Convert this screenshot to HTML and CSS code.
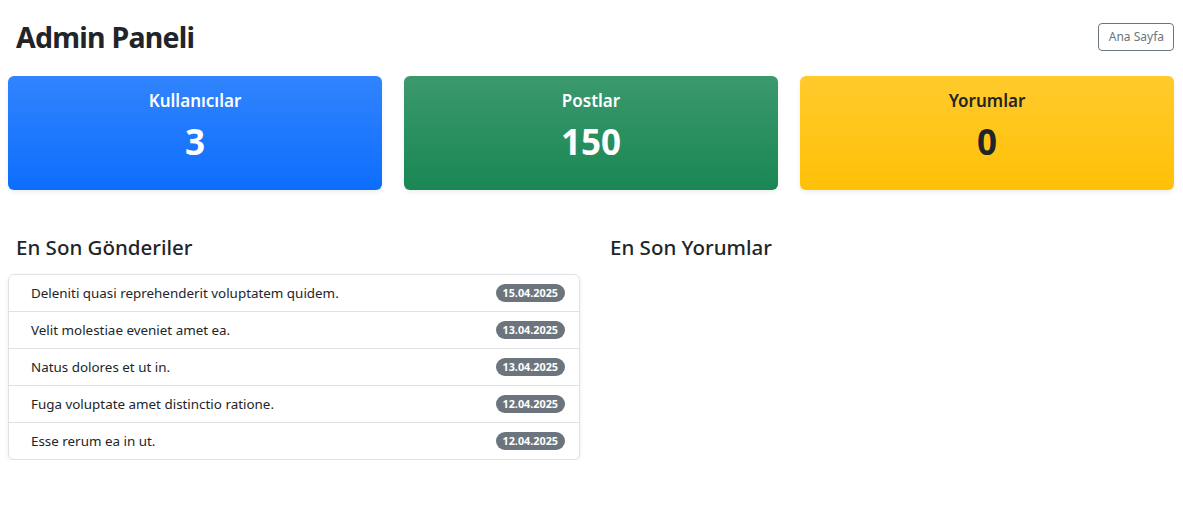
FILE: index.html
```html
<!DOCTYPE html>
<html lang="tr">
<head>
<meta charset="utf-8">
<title>Admin Paneli</title>
<link rel="stylesheet" href="styles.css">
</head>
<body>
<div class="page">
  <header class="topbar">
    <h1 class="title">Admin Paneli</h1>
    <a class="btn-outline" href="#">Ana Sayfa</a>
  </header>

  <section class="stats">
    <div class="stat stat-blue">
      <h5 class="stat-label">Kullanıcılar</h5>
      <p class="stat-value">3</p>
    </div>
    <div class="stat stat-green">
      <h5 class="stat-label">Postlar</h5>
      <p class="stat-value">150</p>
    </div>
    <div class="stat stat-yellow">
      <h5 class="stat-label">Yorumlar</h5>
      <p class="stat-value">0</p>
    </div>
  </section>

  <section class="lists">
    <div class="col">
      <h4 class="section-title">En Son Gönderiler</h4>
      <ul class="list">
        <li class="item"><span>Deleniti quasi reprehenderit voluptatem quidem.</span><span class="badge">15.04.2025</span></li>
        <li class="item"><span>Velit molestiae eveniet amet ea.</span><span class="badge">13.04.2025</span></li>
        <li class="item"><span>Natus dolores et ut in.</span><span class="badge">13.04.2025</span></li>
        <li class="item"><span>Fuga voluptate amet distinctio ratione.</span><span class="badge">12.04.2025</span></li>
        <li class="item"><span>Esse rerum ea in ut.</span><span class="badge">12.04.2025</span></li>
      </ul>
    </div>
    <div class="col">
      <h4 class="section-title">En Son Yorumlar</h4>
    </div>
  </section>
</div>
</body>
</html>
```

FILE: styles.css
```css
* { box-sizing: border-box; }

body {
  margin: 0;
  background: #fff;
  color: #212529;
  font-family: "Noto Sans", "Open Sans", sans-serif;
}

.page {
  padding: 0 9px 0 8px;
}

.topbar {
  display: flex;
  justify-content: space-between;
  align-items: center;
  height: 38px;
  margin-top: 18px;
}

.title {
  margin: 0;
  padding-left: 8px;
  font-size: 28.5px;
  font-weight: 700;
  line-height: 38px;
  letter-spacing: -0.75px;
}

.btn-outline {
  display: inline-block;
  height: 28px;
  line-height: 26px;
  padding: 0 9px 0 10px;
  border: 1px solid #6c757d;
  border-radius: 4px;
  color: #6c757d;
  font-size: 12px;
  text-decoration: none;
  margin-top: -1px;
}

.stats {
  display: grid;
  grid-template-columns: repeat(3, 1fr);
  gap: 22px;
  margin-top: 20px;
}

.stat {
  height: 114px;
  border-radius: 6px;
  box-shadow: 0 2px 4px rgba(0, 0, 0, 0.075);
  text-align: center;
  padding-top: 13px;
  color: #fff;
  background-image: linear-gradient(180deg, rgba(255,255,255,0.15), rgba(255,255,255,0));
}

.stat-blue { background-color: #0d6efd; }
.stat-green { background-color: #198754; }
.stat-yellow { background-color: #ffc107; color: #212529; }

.stat-label {
  margin: 0;
  font-size: 17px;
  font-weight: 600;
  line-height: 24px;
}

.stat-value {
  margin: 8px 0 0;
  font-size: 35px;
  font-weight: 700;
  line-height: 42px;
}

.lists {
  display: grid;
  grid-template-columns: 1fr 1fr;
  gap: 22px;
  margin-top: 43px;
}

.section-title {
  margin: 0 0 13px;
  padding-left: 8px;
  font-size: 20.5px;
  font-weight: 500;
  line-height: 28px;
}

.list {
  list-style: none;
  margin: 0;
  padding: 0;
  border: 1px solid #dee2e6;
  border-radius: 6px;
  box-shadow: 0 2px 4px rgba(0, 0, 0, 0.075);
}

.item {
  display: flex;
  justify-content: space-between;
  align-items: center;
  height: 37px;
  padding: 0 14px 0 22px;
  font-size: 13.4px;
  border-top: 1px solid #dee2e6;
}

.item:first-child { border-top: 0; height: 36px; }

.badge {
  display: inline-block;
  background: #6c757d;
  color: #fff;
  font-size: 10.8px;
  font-weight: 700;
  line-height: 18px;
  padding: 0 7px;
  border-radius: 9px;
}
```
